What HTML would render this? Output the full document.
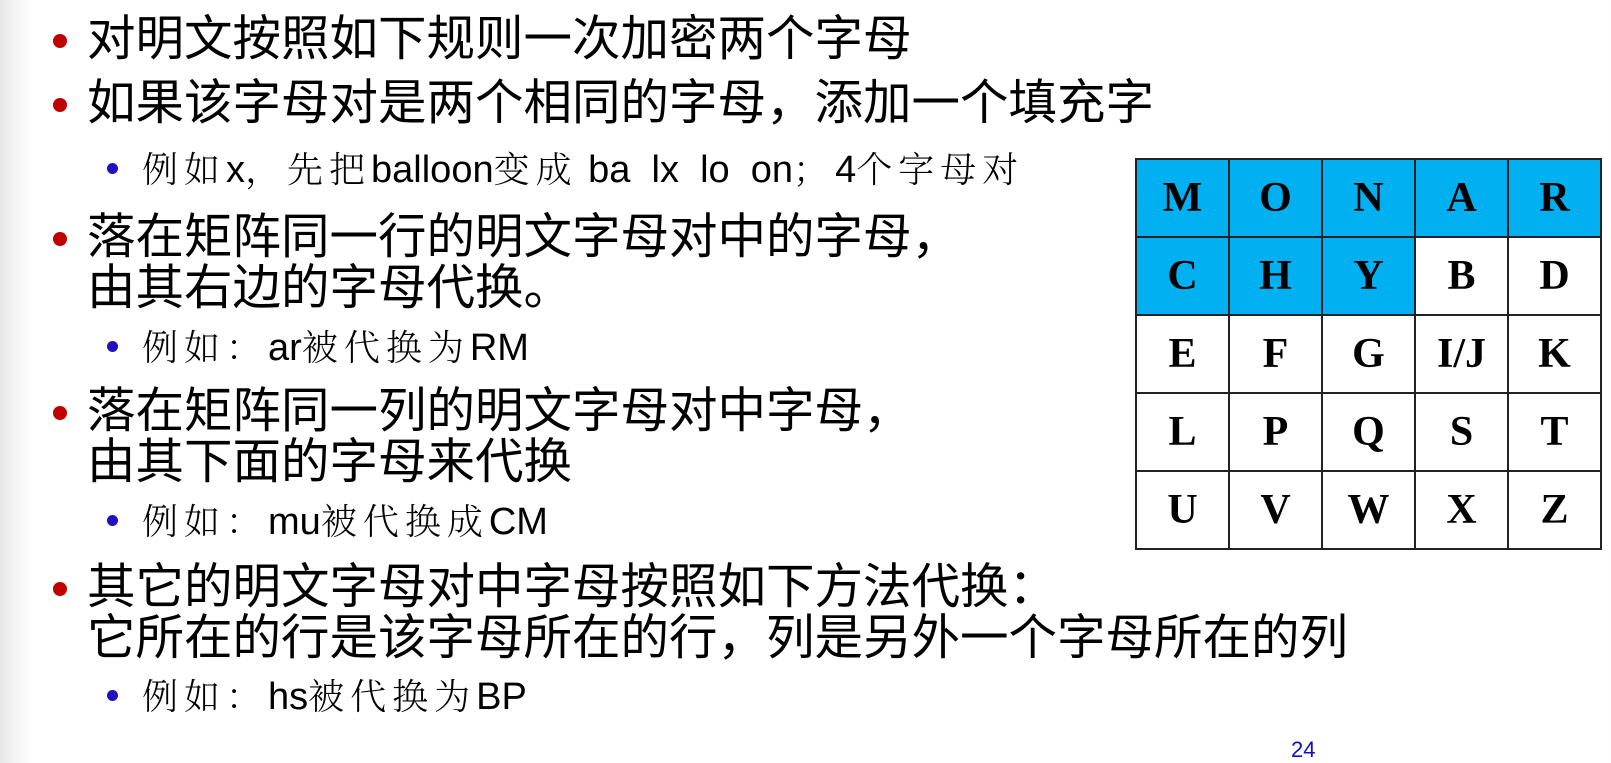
<!DOCTYPE html>
<html><head><meta charset="utf-8"><style>
html,body{margin:0;padding:0}
body{width:1611px;height:742px;position:relative;overflow:hidden;background:#fff;
background:linear-gradient(to right,#e6e6e6 0px,#f6f6f6 18px,#fff 34px,#fff 100%);}
.l{position:absolute;white-space:nowrap;line-height:51px;}
.m{left:87px;font-family:"Liberation Sans","Noto Sans CJK SC",sans-serif;font-size:48.5px;color:#000;}
.s{left:142px;font-family:"Liberation Sans","Noto Serif CJK SC",serif;font-size:38px;color:#000;line-height:44px}
.s .c{font-family:"Noto Serif CJK SC","Noto Sans CJK SC",serif;font-size:36px;letter-spacing:6px;font-weight:300}
.b{position:absolute;border-radius:50%;}
.rb{width:14px;height:14px;background:#c00000;left:53px;}
.bb{width:11px;height:11px;background:#2010c0;left:107px;}
table{position:absolute;left:1135px;top:158px;border-collapse:collapse;}
td{width:91px;height:76px;border:2px solid #222;text-align:center;vertical-align:middle;
font-family:"Liberation Serif","DejaVu Serif",serif;font-weight:bold;font-size:42px;padding:0}
td.h{background:#00b0f0}
</style></head><body>
<div class="b rb" style="top:34px"></div>
<div class="l m" style="top:14px">对明文按照如下规则一次加密两个字母</div>
<div class="b rb" style="top:98px"></div>
<div class="l m" style="top:78px">如果该字母对是两个相同的字母，添加一个填充字</div>
<div class="b bb" style="top:163px"></div>
<div class="l s" style="top:146px"><span class="c">例如</span>x<span class="c">，先把</span>balloon<span class="c">变成</span> ba&nbsp; lx&nbsp; lo&nbsp; on<span class="c">；</span>4<span class="c">个字母对</span></div>
<div class="b rb" style="top:232px"></div>
<div class="l m" style="top:212px">落在矩阵同一行的明文字母对中的字母，<br>由其右边的字母代换。</div>
<div class="b bb" style="top:341px"></div>
<div class="l s" style="top:324px"><span class="c">例如：</span>ar<span class="c">被代换为</span>RM</div>
<div class="b rb" style="top:406px"></div>
<div class="l m" style="top:386px">落在矩阵同一列的明文字母对中字母，<br>由其下面的字母来代换</div>
<div class="b bb" style="top:515px"></div>
<div class="l s" style="top:498px"><span class="c">例如：</span>mu<span class="c">被代换成</span>CM</div>
<div class="b rb" style="top:582px"></div>
<div class="l m" style="top:562px">其它的明文字母对中字母按照如下方法代换：<br>它所在的行是该字母所在的行，列是另外一个字母所在的列</div>
<div class="b bb" style="top:690px"></div>
<div class="l s" style="top:673px"><span class="c">例如：</span>hs<span class="c">被代换为</span>BP</div>
<div style="position:absolute;left:1291px;top:737px;font-family:'Liberation Sans',sans-serif;font-size:22px;color:#1010c0">24</div>
<table>
<tr><td class="h">M</td><td class="h">O</td><td class="h">N</td><td class="h">A</td><td class="h">R</td></tr>
<tr><td class="h">C</td><td class="h">H</td><td class="h">Y</td><td>B</td><td>D</td></tr>
<tr><td>E</td><td>F</td><td>G</td><td>I/J</td><td>K</td></tr>
<tr><td>L</td><td>P</td><td>Q</td><td>S</td><td>T</td></tr>
<tr><td>U</td><td>V</td><td>W</td><td>X</td><td>Z</td></tr>
</table>
</body></html>
